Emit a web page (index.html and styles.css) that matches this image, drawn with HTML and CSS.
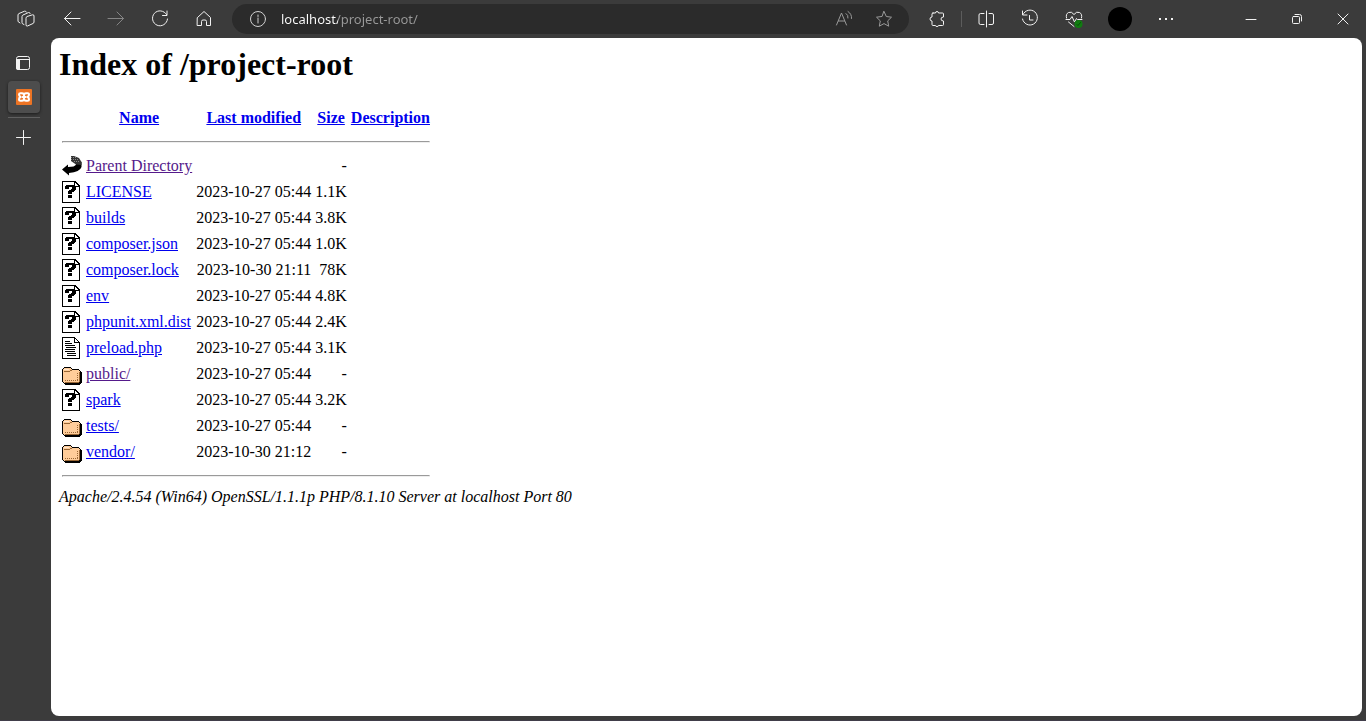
FILE: index.html
```html
<!DOCTYPE html>
<html lang="en">
<head>
<meta charset="utf-8">
<title>Index of /project-root</title>
<link rel="stylesheet" href="styles.css">
</head>
<body>
<svg class="defs" aria-hidden="true">
  <symbol id="unknown" viewBox="0 0 20 22" shape-rendering="crispEdges">
    <path fill="#000" d="M0 0H14V1H15V2H16V3H17V4H18V22H0Z"/>
    <path fill="#fff" d="M1 1H12V6H17V21H1Z"/>
    <path fill="#fff" d="M13 2H14V3H15V4H16V5H13Z"/>
    <path fill="#000" d="M4 4H12V5H13V6H14V9H13V10H12V11H10V13H6V10H7V9H9V8H10V6H7V8H3V5H4ZM6 14H10V17H6Z"/>
  </symbol>
  <symbol id="text" viewBox="0 0 20 22" shape-rendering="crispEdges">
    <path fill="#000" d="M0 0H13V1H14V2H15V3H16V4H17V5H18V22H0Z"/>
    <path fill="#fff" d="M1 1H12V6H17V21H1ZM13 2H14V3H15V4H16V5H13Z"/>
    <path fill="#000" d="M3 4H8V5H3ZM3 6H10V7H3ZM3 8H13V9H3ZM4 10H14V11H4ZM3 12H13V13H3ZM3 14H13V15H3ZM5 16H14V17H5ZM5 18H14V19H5Z"/>
  </symbol>
  <symbol id="folder" viewBox="0 -1 20 22" shape-rendering="crispEdges">
    <path fill="#000" d="M2 3H9V4H10V5H17V6H18V7H19V8H20V19H19V20H18V21H3V20H2V19H1V18H0V5H1V4H2Z"/>
    <path fill="#fc9" d="M2 4H9V5H10V6H17V7H18V18H17V19H2V18H1V5H2Z"/>
    <path fill="#963" d="M2 7H8V8H2ZM8 6H10V7H8ZM17 8H18V18H17V19H3V18H17Z"/>
    <path fill="#fff" d="M2 5H7V6H2Z" opacity=".5"/>
    <path stroke="#963" stroke-dasharray="1 1" d="M3 16.5H16M15.500 9V17"/>
  </symbol>
  <symbol id="back" viewBox="0 0 20 22">
    <path fill="#000" d="M0 14.500 6 9.500V12Q13 12 14 9.500V5L19.500 7V12Q18 17 7 18V20.500Z"/>
    <path fill="#333" d="M9 1H12L17 3 19.500 7V10L14 9.500 9 6Z"/>
    <path fill="none" stroke="#888" stroke-dasharray="1 1" d="M9 2.500H14M9 4.500H17M12 6.500H18"/>
  </symbol>
</svg>

<header class="toolbar">
  <button class="tool" aria-label="Workspaces"><svg viewBox="0 0 20 20"><path d="M10 9Q10 8 11 7.500L16.500 5.800Q18 5.500 18 7V13Q18 14 17 14.500L11.500 17Q10 17.500 10 16ZM8 15.500 7 15Q6 14.800 6 13.500V7.500Q6 6.500 7 6L12.500 3.500Q14 3.300 14.200 4.500M4 14 3 13.200Q2 13 2 12V6Q2 5 3 4.500L8.500 2.200Q10 1.800 10.300 3"/></svg></button>
  <button class="tool tool-back" aria-label="Back"><svg viewBox="0 0 20 20"><path d="M18 9.500H2.500M9 3 2.500 9.500 9 16"/></svg></button>
  <button class="tool dim" aria-label="Forward" disabled><svg viewBox="0 0 20 20"><path d="M2 9.500H17.500M11 3l6.500 6.500L11 16"/></svg></button>
  <button class="tool" aria-label="Refresh"><svg viewBox="0 0 20 20"><path d="M16.500 5.500A7.500 7.500 0 1 0 17.500 10M17 2V6.500H12.500"/></svg></button>
  <button class="tool" aria-label="Home"><svg viewBox="0 0 20 20"><path d="M3.500 8.500 10 2.500l6.500 6V16.500h-4V12.500q0-1.500-1.500-1.500H9Q7.500 11 7.500 12.500v4h-4Z"/></svg></button>
  <form class="address">
    <button type="button" class="site-info" aria-label="View site information"><svg viewBox="0 0 20 20"><circle cx="10" cy="10" r="7.500"/><path d="M10 9V14M10 6V7.500"/></svg></button>
    <input class="url" type="text" aria-label="Address" value="localhost/project-root/" spellcheck="false">
    <button type="button" class="bar-tool" aria-label="Read aloud"><svg viewBox="0 0 20 20"><path d="M2.500 16 7.500 4l5 12M4.500 12h6M12 4.500q2.500 1.500 2 4.500M14 2.500q4 2.500 3.500 7"/></svg></button>
    <button type="button" class="bar-tool" aria-label="Add to favorites"><svg viewBox="0 0 20 20"><path d="m10 2.500 2.300 5 5.200.7-3.800 3.700 1 5.300L10 14.600l-4.700 2.600 1-5.300L2.500 8.200l5.200-.7Z"/></svg></button>
  </form>
  <div class="extras">
    <button class="tool" aria-label="Extensions"><svg viewBox="0 0 20 20"><path d="M6 4H8.500Q8.500 2.500 10 2.500T11.500 4H15.500Q16.500 4 16.500 5V8Q14 8 14 10T16.500 12V15.500Q16.500 16.500 15.500 16.500H11.500Q11.500 17.500 10 17.500T8.500 16.500H6Q5 16.500 5 15.500V12Q3 12 3 10T5 8V5Q5 4 6 4Z"/></svg></button>
    <span class="divider"></span>
    <button class="tool" aria-label="Split screen"><svg viewBox="0 0 20 20"><path d="M10.500 2V18M8 4.500H4.500Q3 4.500 3 6V14Q3 15.500 4.500 15.500H8M13 4.500H16Q17.500 4.500 17.500 6V14Q17.500 15.500 16 15.500H13"/></svg></button>
    <button class="tool" aria-label="History"><svg viewBox="0 0 20 20"><path d="M3 5.500A7.500 7.500 0 1 1 2.500 10M2.500 2V6H7M9.500 6.500V11H13"/></svg></button>
    <button class="tool" aria-label="Browser essentials"><svg viewBox="0 0 20 20"><path d="M2.500 9Q1.500 5 4.500 3.500T10 5.500Q12.500 2 15.500 3.500T17.500 9M2 10.500H6L8 7.500 10.500 13 12.500 9.500 13.500 10.500H18M4.500 13 10 17.500"/><circle class="status" cx="14.500" cy="15" r="4"/><path class="status-mark" d="m13 15.500 1 1 2.500-3"/></svg></button>
    <button class="tool profile" aria-label="Profile"><span class="avatar"></span></button>
    <button class="tool" aria-label="Settings and more"><svg viewBox="0 0 20 20"><path class="dots" d="M3 9h2v2H3ZM9 9h2v2H9ZM15 9h2v2h-2Z"/></svg></button>
  </div>
  <div class="window-controls">
    <button aria-label="Minimize"><svg viewBox="0 0 20 20"><path d="M5 10.500H15"/></svg></button>
    <button aria-label="Restore"><svg viewBox="0 0 20 20"><rect x="5.500" y="7.500" width="7" height="7" rx="1"/><path d="M8 5.500H12.500Q14.500 5.500 14.500 7.500V12"/></svg></button>
    <button aria-label="Close"><svg viewBox="0 0 20 20"><path d="m5 5 10 10M15 5 5 15"/></svg></button>
  </div>
</header>

<div class="workspace">
  <nav class="tabs" aria-label="Tabs">
    <button class="tab-menu" aria-label="Tab actions menu"><svg viewBox="0 0 20 20"><rect x="3.500" y="3.500" width="13" height="13" rx="2"/><path d="M3.500 6.500H16.500"/><path class="solid" d="M3 6H7V17H5Q3 17 3 15Z"/></svg></button>
    <button class="tab" aria-label="Index of /project-root"><svg viewBox="0 0 16 16"><rect class="xampp" width="16" height="16" rx="1"/><path class="xampp-mark" d="M8 6.500Q8 4.200 6 4.200H4.500Q3 4.200 3 5.600T4.500 8Q3 8.800 3 10.300T4.500 11.800H6Q8 11.800 8 9.500 8 11.800 10 11.800H11.500Q13 11.800 13 10.300T11.500 8Q13 7.200 13 5.600T11.500 4.200H10Q8 4.200 8 6.500ZM6.500 8H9.500"/></svg></button>
    <span class="tab-rule"></span>
    <button class="new-tab" aria-label="New tab"><svg viewBox="0 0 20 20"><path d="M10.500 3.500V17.500M3.500 10.500H17.500"/></svg></button>
  </nav>
  <main class="page">
    <h1>Index of /project-root</h1>
    <table class="listing">
      <thead>
        <tr><th class="blank"></th><th><a href="#">Name</a></th><th><a href="#">Last modified</a></th><th><a href="#">Size</a></th><th><a href="#">Description</a></th></tr>
        <tr><td colspan="5"><hr></td></tr>
      </thead>
      <tbody>
        <tr><td><svg class="icon"><use href="#back"/></svg></td><td><a class="visited" href="#">Parent Directory</a></td><td></td><td>-</td><td></td></tr>
        <tr><td><svg class="icon"><use href="#unknown"/></svg></td><td><a href="#">LICENSE</a></td><td>2023-10-27 05:44</td><td>1.1K</td><td></td></tr>
        <tr><td><svg class="icon"><use href="#unknown"/></svg></td><td><a href="#">builds</a></td><td>2023-10-27 05:44</td><td>3.8K</td><td></td></tr>
        <tr><td><svg class="icon"><use href="#unknown"/></svg></td><td><a href="#">composer.json</a></td><td>2023-10-27 05:44</td><td>1.0K</td><td></td></tr>
        <tr><td><svg class="icon"><use href="#unknown"/></svg></td><td><a href="#">composer.lock</a></td><td>2023-10-30 21:11</td><td>78K</td><td></td></tr>
        <tr><td><svg class="icon"><use href="#unknown"/></svg></td><td><a href="#">env</a></td><td>2023-10-27 05:44</td><td>4.8K</td><td></td></tr>
        <tr><td><svg class="icon"><use href="#unknown"/></svg></td><td><a href="#">phpunit.xml.dist</a></td><td>2023-10-27 05:44</td><td>2.4K</td><td></td></tr>
        <tr><td><svg class="icon"><use href="#text"/></svg></td><td><a href="#">preload.php</a></td><td>2023-10-27 05:44</td><td>3.1K</td><td></td></tr>
        <tr><td><svg class="icon"><use href="#folder"/></svg></td><td><a class="visited" href="#">public/</a></td><td>2023-10-27 05:44</td><td>-</td><td></td></tr>
        <tr><td><svg class="icon"><use href="#unknown"/></svg></td><td><a href="#">spark</a></td><td>2023-10-27 05:44</td><td>3.2K</td><td></td></tr>
        <tr><td><svg class="icon"><use href="#folder"/></svg></td><td><a href="#">tests/</a></td><td>2023-10-27 05:44</td><td>-</td><td></td></tr>
        <tr><td><svg class="icon"><use href="#folder"/></svg></td><td><a href="#">vendor/</a></td><td>2023-10-30 21:12</td><td>-</td><td></td></tr>
        <tr><td colspan="5"><hr></td></tr>
      </tbody>
    </table>
    <address>Apache/2.4.54 (Win64) OpenSSL/1.1.1p PHP/8.1.10 Server at localhost Port 80</address>
  </main>
</div>
</body>
</html>
```

FILE: styles.css
```css
* { box-sizing: border-box; }

body {
  margin: 0;
  min-height: 100vh;
  display: flex;
  flex-direction: column;
  background: #3b3b3b;
  border-bottom: 1px solid #413e4a;
  font-family: "Liberation Serif", "Times New Roman", serif;
  font-size: 16px;
  line-height: 18px;
}

.defs { display: none; }

button {
  display: flex;
  align-items: center;
  justify-content: center;
  padding: 0;
  border: 0;
  background: none;
  color: #f2f2f2;
}

button svg {
  display: block;
  width: 20px;
  height: 20px;
  fill: none;
  stroke: currentColor;
  stroke-width: 1;
  stroke-linejoin: round;
  stroke-linecap: round;
}

.toolbar {
  display: flex;
  align-items: center;
  height: 38px;
  padding-left: 4px;
}

.tool {
  width: 44px;
  height: 32px;
  flex: none;
}

.tool-back { margin-left: 2px; }
.dim { color: #858585; }

.address {
  flex: 1;
  display: flex;
  align-items: center;
  height: 30px;
  margin: 0 6px;
  padding: 0 5px 0 10px;
  border-radius: 15px;
  background: #2b2b2b;
}

.site-info { width: 32px; height: 28px; color: #d0d0d0; }
.bar-tool { width: 40px; height: 28px; color: #9a9a9a; }

.url {
  flex: 1;
  min-width: 0;
  margin: 0 0 0 7px;
  padding: 0;
  border: 0;
  outline: 0;
  font: 13px/20px "Noto Sans", "Segoe UI", sans-serif;
  color: transparent;
  caret-color: #fff;
  background: linear-gradient(90deg, #fff 57px, #999 57px);
  background-clip: text;
}

.extras { display: flex; align-items: center; }
.divider { width: 1px; height: 16px; margin: 0 2px; background: #5c5c5c; }
.profile { margin: 0 2px; }

.avatar {
  width: 24px;
  height: 24px;
  border-radius: 50%;
  background: #000;
}

.dots, .solid { fill: currentColor; stroke: none; }
.status { fill: #107c10; stroke: none; }
.status-mark { stroke: #075007; }

.window-controls { display: flex; margin-left: 40px; }
.window-controls button { width: 46px; height: 38px; }

.workspace { flex: 1; display: flex; }

.tabs {
  width: 51px;
  padding: 9px 11px 0 8px;
  display: flex;
  flex-direction: column;
}

.tab-menu { height: 32px; width: 30px; }

.tab {
  height: 32px;
  margin-top: 2px;
  border-radius: 4px;
  background: #4d4d4d;
  box-shadow: 0 1px 3px #1c1c1c;
}

.tab svg { width: 16px; height: 16px; }
.xampp { fill: #ed7424; stroke: none; }
.xampp-mark { stroke: #fff; stroke-width: 2; }
.tab-rule { height: 1px; margin-top: 4px; background: #606060; }
.new-tab { width: 30px; height: 32px; margin-top: 3px; }

.page {
  flex: 1;
  margin: 0 4px 4px 0;
  padding: 8px;
  border-radius: 8px;
  background: #fff;
  color: #000;
}

h1 {
  margin: 0 0 21px;
  font-size: 32px;
  line-height: 37px;
}

.listing { border-spacing: 2px; }
.listing td, .listing th { padding: 1px; white-space: nowrap; }
.listing .blank { height: 24px; }
.listing td:nth-child(3), .listing td:nth-child(4) { text-align: right; }

.listing hr {
  margin: 8px 0;
  border: 1px solid;
  border-color: #9a9a9a #eeeeee #eeeeee #9a9a9a;
}

.icon { display: block; width: 20px; height: 22px; }

a { color: #0000ee; }
.visited { color: #551a8b; }
address { font-style: italic; }
```
